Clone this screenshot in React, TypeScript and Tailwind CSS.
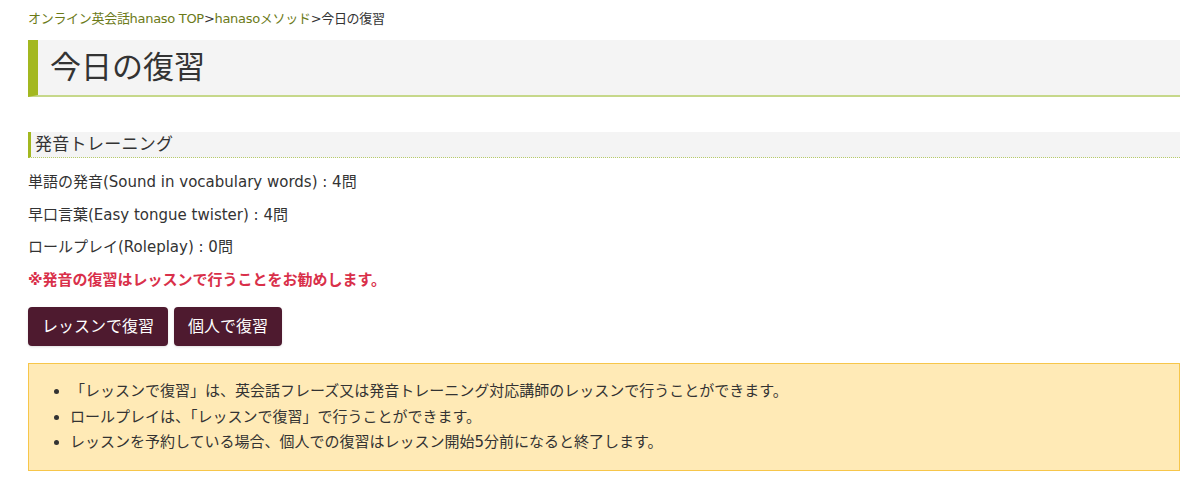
const items = [
  '単語の発音(Sound in vocabulary words) : 4問',
  '早口言葉(Easy tongue twister) : 4問',
  'ロールプレイ(Roleplay) : 0問',
]

const notes = [
  '「レッスンで復習」は、英会話フレーズ又は発音トレーニング対応講師のレッスンで行うことができます。',
  'ロールプレイは、「レッスンで復習」で行うことができます。',
  'レッスンを予約している場合、個人での復習はレッスン開始5分前になると終了します。',
]

export default function App() {
  return (
    <div className="min-h-[501px] bg-white pl-[28px] pr-[20px] pt-[9px] text-[#333] font-['DejaVu_Sans','Noto_Sans_CJK_JP',sans-serif]">
      {/* Breadcrumb */}
      <nav className="text-[13px] leading-[19px] tracking-[-0.3px]">
        <a href="#" className="text-[#6b7a18]">オンライン英会話hanaso TOP</a>
        <span>&gt;</span>
        <a href="#" className="text-[#6b7a18]">hanasoメソッド</a>
        <span>&gt;</span>
        <span>今日の復習</span>
      </nav>

      {/* Page title */}
      <h1 className="mt-[12px] flex h-[57px] items-center border-l-[10px] border-b-2 border-l-[#a3b820] border-b-[#c6d88a] bg-[#f4f4f4] pl-[12px] text-[31px] font-normal text-[#333]">
        今日の復習
      </h1>

      {/* Section */}
      <h2 className="mt-[35px] flex h-[26px] items-center border-l-[3px] border-b border-l-[#a3b820] border-b-[#b7cc6a] [border-bottom-style:dotted] bg-[#f4f4f4] pl-[4px] text-[17px] font-normal tracking-[0.3px]">
        発音トレーニング
      </h2>

      <div className="mt-[8px] text-[15px]">
        {items.map((t) => (
          <p key={t} className="leading-[32.5px]">{t}</p>
        ))}
        <p className="leading-[32.5px] font-bold text-[#d9304a]">※発音の復習はレッスンで行うことをお勧めします。</p>
      </div>

      <div className="mt-[11px] flex gap-[6px]">
        <button className="h-[39px] rounded-[4px] bg-[#4e1a2f] px-[14px] text-[16px] text-white shadow-sm">レッスンで復習</button>
        <button className="h-[39px] rounded-[4px] bg-[#4e1a2f] px-[14px] text-[16px] text-white shadow-sm">個人で復習</button>
      </div>

      <div className="mt-[17px] border border-[#f7c64a] bg-[#ffeab6] pt-[15px] pb-[14px] pl-[41px] pr-4">
        <ul className="list-disc text-[15px] leading-[25.5px] text-[#333]">
          {notes.map((n) => (
            <li key={n}>{n}</li>
          ))}
        </ul>
      </div>
    </div>
  )
}
